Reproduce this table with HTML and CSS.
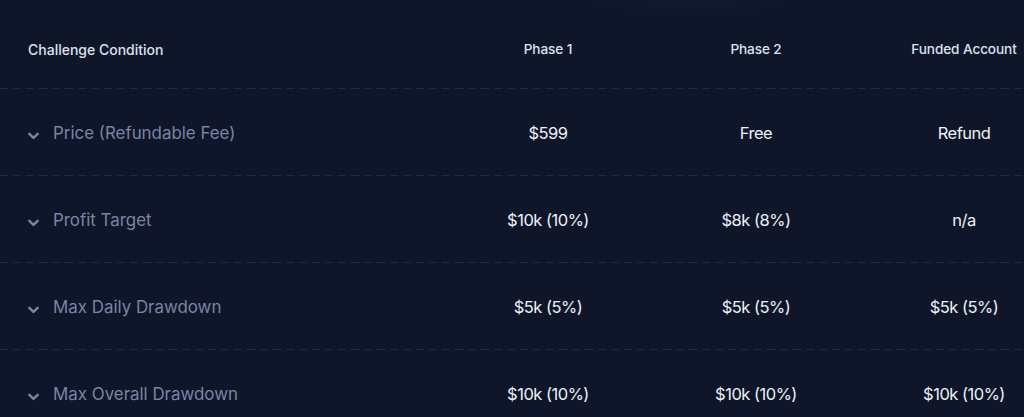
FILE: index.html
```html
<!DOCTYPE html>
<html lang="en">
<head>
<meta charset="utf-8">
<title>Challenge Conditions</title>
<link rel="stylesheet" href="styles.css">
</head>
<body>
<div class="glow"></div>
<div class="table">
  <div class="row head">
    <div class="cell label">Challenge Condition</div>
    <div class="cell">Phase 1</div>
    <div class="cell">Phase 2</div>
    <div class="cell">Funded Account</div>
  </div>
  <div class="row">
    <div class="cell label"><svg class="chev" viewBox="0 0 10 7"><path d="M1.2 1.5 L5 5.2 L8.8 1.5"/></svg>Price (Refundable Fee)</div>
    <div class="cell">$599</div>
    <div class="cell">Free</div>
    <div class="cell">Refund</div>
  </div>
  <div class="row">
    <div class="cell label"><svg class="chev" viewBox="0 0 10 7"><path d="M1.2 1.5 L5 5.2 L8.8 1.5"/></svg>Profit Target</div>
    <div class="cell">$10k (10%)</div>
    <div class="cell">$8k (8%)</div>
    <div class="cell">n/a</div>
  </div>
  <div class="row">
    <div class="cell label"><svg class="chev" viewBox="0 0 10 7"><path d="M1.2 1.5 L5 5.2 L8.8 1.5"/></svg>Max Daily Drawdown</div>
    <div class="cell">$5k (5%)</div>
    <div class="cell">$5k (5%)</div>
    <div class="cell">$5k (5%)</div>
  </div>
  <div class="row last">
    <div class="cell label"><svg class="chev" viewBox="0 0 10 7"><path d="M1.2 1.5 L5 5.2 L8.8 1.5"/></svg>Max Overall Drawdown</div>
    <div class="cell">$10k (10%)</div>
    <div class="cell">$10k (10%)</div>
    <div class="cell">$10k (10%)</div>
  </div>
</div>
</body>
</html>
```
FILE: styles.css
```css
html, body {
  margin: 0;
  padding: 0;
}
body {
  background: #10162a;
  width: 1024px;
  height: 417px;
  overflow: hidden;
  font-family: Inter, "Noto Sans", sans-serif;
  position: relative;
}
.glow {
  position: absolute;
  left: 580px;
  top: -30px;
  width: 220px;
  height: 45px;
  border-radius: 50%;
  background: radial-gradient(ellipse at center, rgba(20, 30, 48, 0.7), rgba(16, 22, 42, 0) 70%);
}
.table {
  position: relative;
  width: 1068px;
}
.row {
  display: grid;
  grid-template-columns: 444px 208px 208px 208px;
  height: 86px;
  padding-top: 1px;
  align-items: center;
  background-image: repeating-linear-gradient(90deg, #232a3e 0 8px, transparent 8px 13px);
  background-size: 100% 1px;
  background-repeat: no-repeat;
  background-position: left bottom;
}
.row.head {
  height: 80px;
  padding-top: 9px;
}
.row.last {
  background-image: none;
}
.cell {
  text-align: center;
  color: #eef1f7;
  font-size: 16.5px;
  letter-spacing: -0.5px;
}
.head .cell {
  font-size: 13.6px;
  color: #dbe3ee;
  font-weight: 500;
  letter-spacing: -0.1px;
}
.cell.label {
  text-align: left;
  padding-left: 28px;
  color: #7a84a4;
  display: flex;
  align-items: center;
  font-size: 16.9px;
  letter-spacing: 0;
}
.head .cell.label {
  color: #dbe3ee;
  font-size: 14px;
  letter-spacing: 0;
}
.chev {
  width: 11px;
  height: 8px;
  margin-right: 14px;
  margin-top: 5px;
  fill: none;
  stroke: #7a84a4;
  stroke-width: 2.2;
  stroke-linecap: round;
  stroke-linejoin: round;
}
```
